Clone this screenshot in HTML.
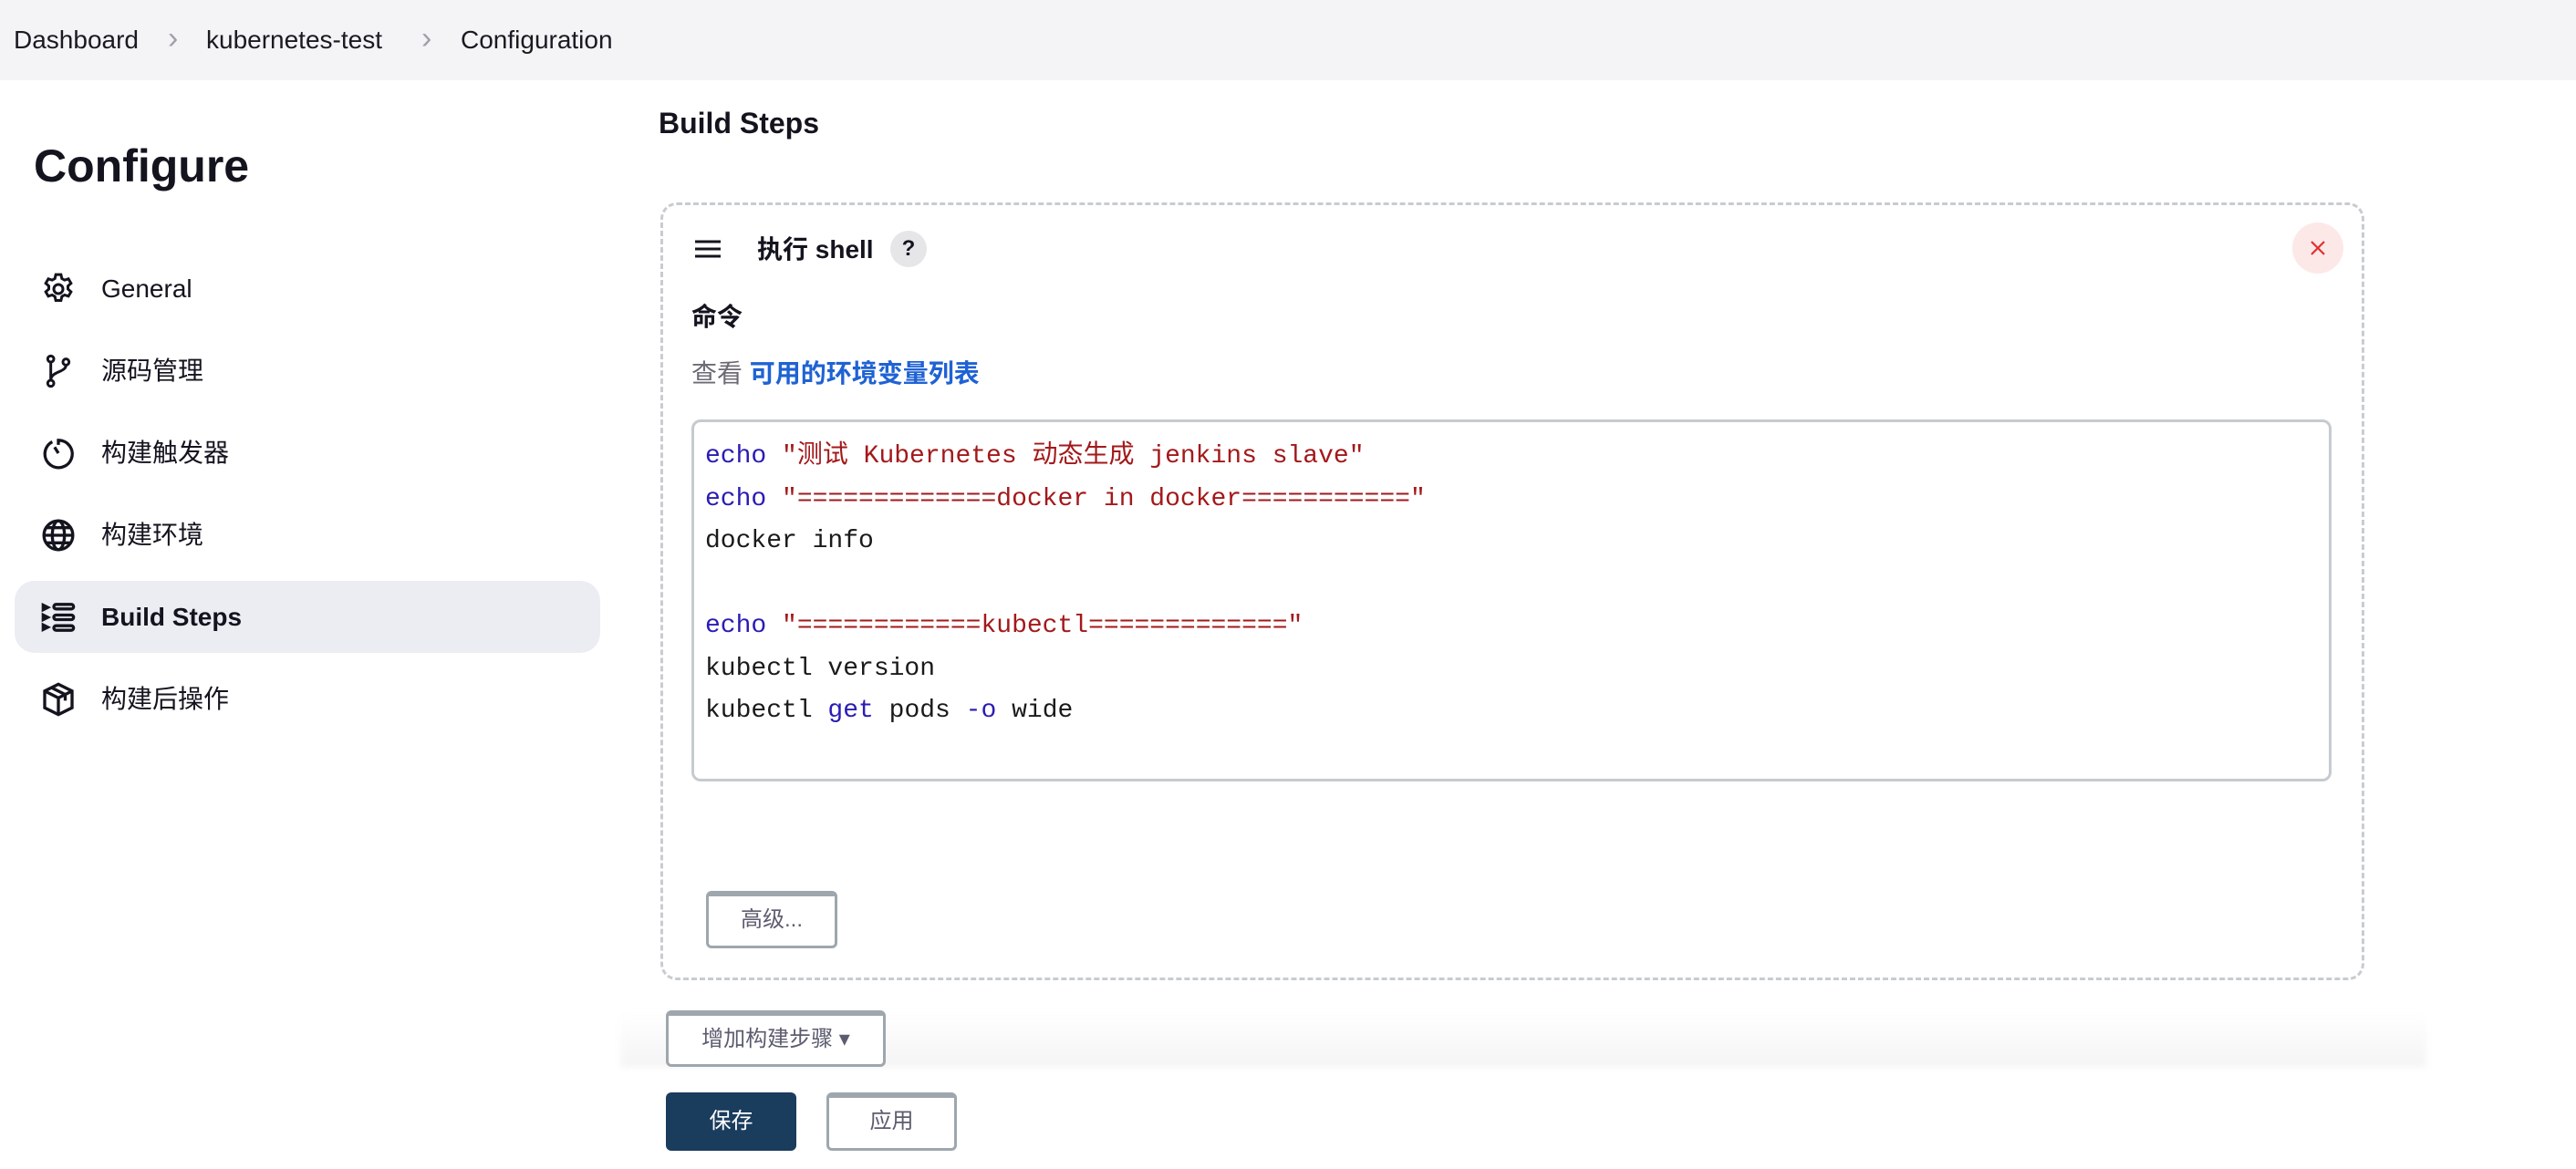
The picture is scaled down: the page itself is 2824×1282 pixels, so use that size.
<!DOCTYPE html>
<html><head><meta charset="utf-8"><style>
*{box-sizing:border-box;margin:0;padding:0}
body{width:2824px;height:1282px;background:#fff;font-family:"Liberation Sans","Noto Sans CJK SC",sans-serif;color:#14141f;position:relative;overflow:hidden}
.abs{position:absolute}
.hdr{left:0;top:0;width:2824px;height:88px;background:#f4f4f6}
.bc{top:24px;font-size:28px;line-height:40px;color:#1a1a22}
.chev{top:22px;font-size:34px;color:#a0a0a8;line-height:40px}
.side{left:111px;font-size:28px;line-height:40px;color:#14141f}
.ic{left:44px;width:40px;height:40px}
.code{font-family:"Liberation Mono","Noto Sans CJK SC",monospace;font-size:28px;line-height:40px;left:773px;white-space:pre;color:#1a1a1a}
.k{color:#2a1cb4}.s{color:#a3191b}
.btn{border:3px solid #9ea7ad;border-top-width:6px;border-radius:6px;background:#fff;color:#5c5c70;font-size:24px;text-align:center}
</style></head><body>
<div class="abs hdr"></div>
<div class="abs bc" style="left:15px">Dashboard</div>
<div class="abs chev" style="left:184px">&#x203A;</div>
<div class="abs bc" style="left:226px">kubernetes-test</div>
<div class="abs chev" style="left:462px">&#x203A;</div>
<div class="abs bc" style="left:505px">Configuration</div>

<div class="abs" style="left:37px;top:150px;font-size:50px;font-weight:bold;line-height:64px">Configure</div>

<div class="abs" style="left:16px;top:637px;width:642px;height:79px;background:#ebedf2;border-radius:22px"></div>

<svg class="abs ic" style="top:297px" viewBox="0 0 24 24" fill="none" stroke="#14141f" stroke-width="1.8"><circle cx="12" cy="12" r="3"/><path d="M10.3 2.5h3.4l.6 2.6 1.8 1 2.5-.8 1.7 2.9-2 1.8v2l2 1.8-1.7 2.9-2.5-.8-1.8 1-.6 2.6h-3.4l-.6-2.6-1.8-1-2.5.8-1.7-2.9 2-1.8v-2l-2-1.8 1.7-2.9 2.5.8 1.8-1z"/></svg>
<div class="abs side" style="top:297px">General</div>
<svg class="abs ic" style="top:387px" viewBox="0 0 24 24" fill="none" stroke="#14141f" stroke-width="1.8"><circle cx="7" cy="4" r="2"/><circle cx="7" cy="20" r="2"/><circle cx="17" cy="6" r="2"/><path d="M7 6v12M17 8c0 5-10 4-10 10"/></svg>
<div class="abs side" style="top:387px">源码管理</div>
<svg class="abs ic" style="top:477px" viewBox="0 0 24 24" fill="none" stroke="#14141f" stroke-width="2"><path d="M8 4.5A9 9 0 1 0 12 3.5v3"/><path d="M12 12 9.5 8"/></svg>
<div class="abs side" style="top:477px">构建触发器</div>
<svg class="abs ic" style="top:567px" viewBox="0 0 24 24" fill="none" stroke="#14141f" stroke-width="2"><circle cx="12" cy="12" r="9.5"/><ellipse cx="12" cy="12" rx="4" ry="9.5"/><path d="M2.5 12h19M4 7h16M4 17h16"/></svg>
<div class="abs side" style="top:567px">构建环境</div>
<svg class="abs ic" style="top:657px" viewBox="0 0 24 24" fill="none" stroke="#14141f" stroke-width="2"><path d="M2 4l3 1.5L2 7zM2 10.5l3 1.5-3 1.5zM2 17l3 1.5L2 20z"/><rect x="9" y="3.5" width="13" height="3" rx="1.5"/><rect x="9" y="10.5" width="13" height="3" rx="1.5"/><rect x="9" y="17.5" width="13" height="3" rx="1.5"/></svg>
<div class="abs side" style="top:657px;font-weight:600">Build Steps</div>
<svg class="abs ic" style="top:747px" viewBox="0 0 24 24" fill="none" stroke="#14141f" stroke-width="2"><path d="M12 2 21 6.5v11L12 22 3 17.5v-11z"/><path d="M3 6.5 12 11l9-4.5M12 11v11M7.5 4.3l9 4.5v4"/></svg>
<div class="abs side" style="top:747px">构建后操作</div>

<div class="abs" style="left:722px;top:114px;font-size:32px;font-weight:600;line-height:42px">Build Steps</div>

<div class="abs" style="left:724px;top:222px;width:1868px;height:853px;border:3px dashed #c8ccd0;border-radius:18px"></div>
<svg class="abs" style="left:760px;top:260px" width="32" height="26" viewBox="0 0 32 26"><path d="M2 5h28M2 13h28M2 21h28" stroke="#14141f" stroke-width="3"/></svg>
<div class="abs" style="left:830px;top:254px;font-size:28px;font-weight:bold;line-height:40px">执行 shell</div>
<div class="abs" style="left:976px;top:253px;width:40px;height:40px;border-radius:50%;background:#e6e6e9;font-size:24px;font-weight:bold;text-align:center;line-height:40px">?</div>
<div class="abs" style="left:2513px;top:244px;width:56px;height:56px;border-radius:50%;background:#fde8e8"></div>
<svg class="abs" style="left:2531px;top:262px" width="20" height="20" viewBox="0 0 20 20"><path d="M3 3l14 14M17 3 3 17" stroke="#e03030" stroke-width="2.2"/></svg>

<div class="abs" style="left:758px;top:328px;font-size:28px;font-weight:600;line-height:40px">命令</div>
<div class="abs" style="left:758px;top:390px;font-size:28px;line-height:40px;color:#6b6b75">查看 <span style="color:#1f62d4;font-weight:600">可用的环境变量列表</span></div>

<div class="abs" style="left:758px;top:460px;width:1798px;height:397px;border:3px solid #c5cbcf;border-radius:10px"></div>
<div class="abs code" style="top:481px"><span class="k">echo</span> <span class="s">"测试 Kubernetes 动态生成 jenkins slave"</span></div>
<div class="abs code" style="top:528px"><span class="k">echo</span> <span class="s">"=============docker in docker==========="</span></div>
<div class="abs code" style="top:574px">docker info</div>
<div class="abs code" style="top:667px"><span class="k">echo</span> <span class="s">"============kubectl============="</span></div>
<div class="abs code" style="top:714px">kubectl version</div>
<div class="abs code" style="top:760px">kubectl <span class="k">get</span> pods <span class="k">-o</span> wide</div>

<div class="abs btn" style="left:774px;top:977px;width:144px;height:63px;line-height:52px">高级...</div>

<div class="abs" style="left:680px;top:1110px;width:1980px;height:60px;background:linear-gradient(#fff,#f4f4f5);filter:blur(4px)"></div>
<div class="abs btn" style="left:730px;top:1108px;width:241px;height:62px;line-height:52px">增加构建步骤 ▾</div>

<div class="abs" style="left:730px;top:1198px;width:143px;height:64px;background:#1a3c5d;border-radius:6px;color:#fff;font-size:24px;text-align:center;line-height:64px">保存</div>
<div class="abs btn" style="left:906px;top:1198px;width:143px;height:64px;line-height:52px">应用</div>
</body></html>
